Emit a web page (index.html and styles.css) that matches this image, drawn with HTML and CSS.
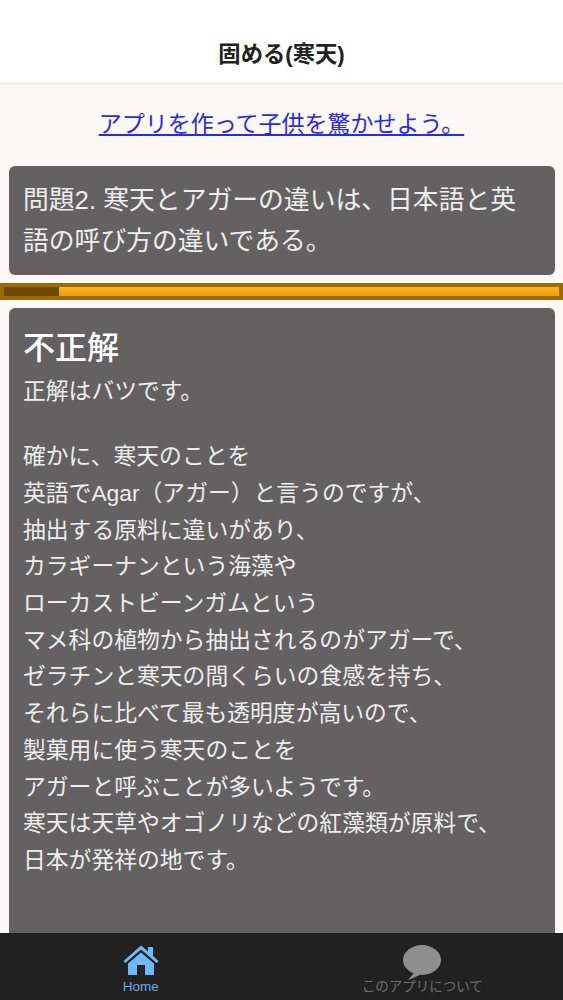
FILE: index.html
```html
<!DOCTYPE html>
<html lang="ja">
<head>
  <meta charset="UTF-8">
  <meta name="viewport" content="width=device-width, initial-scale=1.0">
  <title>固める(寒天)</title>
  <link rel="stylesheet" href="styles.css">
</head>
<body>
  <div class="app">
    <header class="nav-bar">
      <h1>固める(寒天)</h1>
    </header>

    <main class="content">
      <a class="promo" href="#">アプリを作って子供を驚かせよう。</a>

      <div class="panel question">問題2. 寒天とアガーの違いは、日本語と英語の呼び方の違いである。</div>

      <div class="progress"><div class="progress-fill"></div></div>

      <div class="panel answer">
        <h2>不正解</h2>
        <p>正解はバツです。</p>
        <p class="explain">確かに、寒天のことを<br>英語でAgar（アガー）と言うのですが、<br>抽出する原料に違いがあり、<br>カラギーナンという海藻や<br>ローカストビーンガムという<br>マメ科の植物から抽出されるのがアガーで、<br>ゼラチンと寒天の間くらいの食感を持ち、<br>それらに比べて最も透明度が高いので、<br>製菓用に使う寒天のことを<br>アガーと呼ぶことが多いようです。<br>寒天は天草やオゴノリなどの紅藻類が原料で、<br>日本が発祥の地です。</p>
      </div>
    </main>

    <nav class="tab-bar">
      <a class="tab active" href="#">
        <svg class="home-icon" width="36" height="32" viewBox="0 0 36 32">
          <path fill="#6db8f7" d="M25 3h5v9l5.5 5-1.800 2L18 5.500 2.300 19l-1.800-2L18 1.500l7 6z"/>
          <path fill="#6db8f7" d="M18 8.500 31 19.500V31H22V21H14V31H5V19.500z"/>
        </svg>
        <span>Home</span>
      </a>
      <a class="tab" href="#">
        <svg class="chat-icon" width="38" height="36" viewBox="0 0 38 36">
          <ellipse cx="19" cy="15" rx="19" ry="15" fill="#8e8e8e"/>
          <path fill="#8e8e8e" d="M9 25 11 28 5 35 17 30z"/>
        </svg>
        <span>このアプリについて</span>
      </a>
    </nav>
  </div>
</body>
</html>
```

FILE: styles.css
```css
body {
  margin: 0;
  font-family: "Liberation Sans", "Noto Sans CJK JP", sans-serif;
}

.app {
  display: flex;
  flex-direction: column;
  height: 1000px;
  overflow: hidden;
  background: #fbf9f8;
}

.nav-bar {
  flex: none;
  box-sizing: border-box;
  height: 84px;
  padding-top: 41px;
  background: white;
  border-bottom: 1px solid #e6e6e6;
  text-align: center;
}

.nav-bar h1 {
  margin: 0;
  font-size: 22.300px;
  line-height: 28px;
  font-weight: bold;
  color: #222;
}

.content {
  flex: 1;
  min-height: 0;
  overflow: hidden;
}

.promo {
  display: block;
  width: max-content;
  margin: 25px auto 27px;
  font-size: 23px;
  line-height: 30px;
  color: #2a2aee;
}

.panel {
  margin: 0 8px 0 9px;
  background: #636161;
  border-radius: 6px;
  color: #eeeeee;
}

.question {
  box-sizing: border-box;
  height: 109px;
  padding: 14px 20px 0 14px;
  font-size: 25.800px;
  line-height: 41px;
}

.progress {
  box-sizing: border-box;
  height: 17px;
  margin: 8px 0;
  padding: 4px;
  background: #9c6a00;
}

.progress-fill {
  height: 100%;
  background: linear-gradient(to bottom, #f8b428, #ec9e00);
  border-left: 55px solid #6e4800;
}

.answer {
  padding: 20px 14px 60px;
}

.answer h2 {
  margin: 0;
  font-size: 32px;
  line-height: 40px;
  font-weight: 500;
  color: white;
}

.answer p {
  margin: 5px 0 0;
  font-size: 22.800px;
  line-height: 36.700px;
}

.answer .explain {
  margin-top: 28.500px;
}

.tab-bar {
  flex: none;
  display: flex;
  height: 67px;
  background: #222121;
}

.tab {
  flex: 1;
  display: flex;
  flex-direction: column;
  align-items: center;
  justify-content: flex-end;
  padding-bottom: 6px;
  font-size: 13.500px;
  line-height: 14px;
  color: #6e6e6e;
  text-decoration: none;
}

.home-icon {
  margin-bottom: 4px;
}

.chat-icon {
  margin-bottom: -1px;
}

.tab.active {
  color: #6aaee8;
}
```
